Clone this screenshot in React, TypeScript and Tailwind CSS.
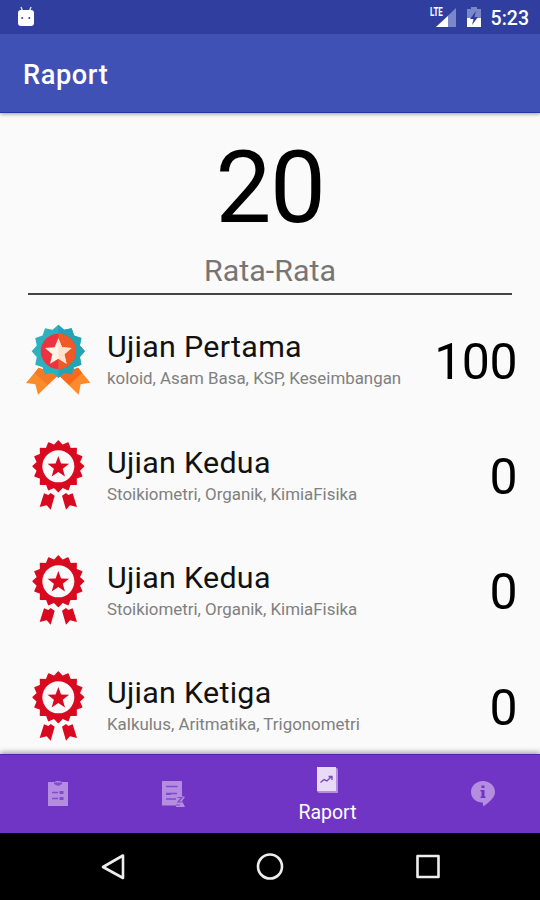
import clsx from 'clsx'

type Ujian = {
  id: number
  judul: string
  materi: string
  nilai: number
}

const daftarUjian: Ujian[] = [
  { id: 1, judul: 'Ujian Pertama', materi: 'koloid, Asam Basa, KSP, Keseimbangan', nilai: 100 },
  { id: 2, judul: 'Ujian Kedua', materi: 'Stoikiometri, Organik, KimiaFisika', nilai: 0 },
  { id: 3, judul: 'Ujian Kedua', materi: 'Stoikiometri, Organik, KimiaFisika', nilai: 0 },
  { id: 4, judul: 'Ujian Ketiga', materi: 'Kalkulus, Aritmatika, Trigonometri', nilai: 0 },
]

// points of a star / zigzag seal, first tip pointing up
function starPoints(cx: number, cy: number, outer: number, inner: number, tips: number) {
  return Array.from({ length: tips * 2 }, (_, i) => {
    const r = i % 2 === 0 ? outer : inner
    const a = (Math.PI * i) / tips - Math.PI / 2
    return `${(cx + r * Math.cos(a)).toFixed(2)},${(cy + r * Math.sin(a)).toFixed(2)}`
  }).join(' ')
}

function MedalColor() {
  return (
    <svg viewBox="36 38 216 216" className="w-[72px] h-[72px] shrink-0">
      <path d="M86 172 L48 218 L76 222 L84 253 L145 194 Z" fill="#fb8c2c" />
      <path d="M204 172 L241 217 L212 222 L206 253 L145 194 Z" fill="#ff8a2b" />
      <path d="M86 172 L74 188 L112 224 L145 194 Z" fill="#f47a25" />
      <path d="M204 172 L216 187 L178 224 L145 194 Z" fill="#f7691c" />
      <polygon points={starPoints(145, 123, 80, 67, 12)} fill="#2eb1bf" />
      <clipPath id="half">
        <rect x="145" y="30" width="100" height="190" />
      </clipPath>
      <polygon points={starPoints(145, 123, 80, 67, 12)} fill="#25a3b4" clipPath="url(#half)" />
      <circle cx="145" cy="123" r="53" fill="#ee3340" />
      <circle cx="145" cy="123" r="53" fill="#f05a28" clipPath="url(#half)" />
      <polygon points={starPoints(145, 126, 42, 19, 5)} fill="#fff4e6" />
      <polygon points={starPoints(145, 126, 42, 19, 5)} fill="#ffe3cc" clipPath="url(#half)" />
    </svg>
  )
}

function MedalRed() {
  return (
    <svg viewBox="36 38 216 216" className="w-[72px] h-[72px] shrink-0" fill="#d90a20">
      <polygon points={starPoints(145, 123, 76, 64, 16)} stroke="#d90a20" strokeWidth="4" strokeLinejoin="round" />
      <circle cx="145" cy="123" r="48" fill="#fafafa" />
      <polygon points={starPoints(145, 126, 34, 14, 5)} />
      <path d="M102 204 L115 209 L122 203 L134 211 L122 253 L110 240 L89 245 Z" />
      <path d="M188 204 L175 209 L168 203 L156 211 L168 253 L180 240 L201 245 Z" />
    </svg>
  )
}

function StatusBar() {
  return (
    <div className="h-[34px] bg-[#303f9f] flex items-center justify-between pl-[17px] pr-[11px]">
      <svg viewBox="0 0 18 22" className="w-[18px] h-[22px]">
        <path d="M4 1 L5.5 5 M14 1 L12.5 5" stroke="#dfe3fa" strokeWidth="1.4" />
        <path d="M1 7 Q1 4 4 4 H14 Q17 4 17 7 V17 Q17 20 14 20 H4 Q1 20 1 17 Z" fill="#fff" />
        <circle cx="5.2" cy="12" r="1" fill="#303f9f" />
        <circle cx="12.3" cy="12" r="1" fill="#303f9f" />
      </svg>
      <div className="flex items-center">
        <div className="relative w-[26px] h-[22px] mr-[10px]">
          <svg viewBox="0 0 26 22" className="w-full h-full">
            <path d="M25 2 V21 H5 Z" fill="#7c87ca" />
            <path d="M17 10 V21 H5 Z" fill="#fff" />
            <path d="M0 0 H14 V12 H0 Z" fill="#303f9f" />
          </svg>
          <span className="absolute left-[-1px] top-0 text-[12px] leading-[12px] font-bold scale-x-[0.66] origin-left">LTE</span>
        </div>
        <svg viewBox="0 0 14 22" className="w-[14px] h-[22px] mr-[10px]">
          <path d="M4 1 H10 V3 H14 V21 H0 V3 H4 Z" fill="#7c87ca" />
          <path d="M0 12 H14 V21 H0 Z" fill="#fff" />
          <path d="M9 5 L3 13 H6.5 L5 19 L11 11 H7.5 Z" fill="#303f9f" />
        </svg>
        <span className="text-[19.5px] leading-none font-medium relative top-[2px]">5:23</span>
      </div>
    </div>
  )
}

function UjianRow({ ujian }: { ujian: Ujian }) {
  return (
    <div className="h-[115.4px] shrink-0 flex items-center pl-[22px] pr-[23px]">
      {ujian.nilai > 0 ? <MedalColor /> : <MedalRed />}
      <div className="ml-[13px] flex-1">
        <p className="text-[30.4px] leading-[36px] tracking-[0.3px] text-[#111]">{ujian.judul}</p>
        <p className="text-[16.9px] leading-[20px] mt-[3px] text-[#808080] whitespace-nowrap">{ujian.materi}</p>
      </div>
      <p className="text-[50px] leading-none tracking-[-0.5px] text-black pt-[6px]">{ujian.nilai}</p>
    </div>
  )
}

function BottomNav() {
  return (
    <nav className="relative h-[79px] shrink-0 bg-[#7035c5] border-t border-[#5a1eb0] flex shadow-[0_-2px_5px_rgba(0,0,0,0.35)]">
      <div className="w-[115px] flex items-center justify-center">
        <svg viewBox="0 0 20 25" className="w-5 h-[25px] mb-[2px]">
          <path d="M0 1 H6 Q10 -1 14 1 H20 V25 H0 Z" fill="#b48ce0" />
          <path d="M6 1.5 H14 V3 L10 5 L6 3 Z" fill="#7f4acb" />
          <path d="M4 11.5 H10 M4 17.5 H10" stroke="#7f4acb" strokeWidth="1.3" />
          <path d="M11.500 10 H15.500 V13 H11.500 Z M11.500 16 H15.500 V19 H11.500 Z" fill="#7f4acb" />
        </svg>
      </div>
      <div className="w-[116px] flex items-center justify-center">
        <svg viewBox="0 0 23 27" className="w-[23px] h-[27px]">
          <path d="M0 0 H20 V15 L23 16 L20 20 L23 26 H14 V24.500 H0 Z" fill="#b48ce0" />
          <path d="M4 5.500 H15.500 M4 12.500 H15 M4 18 H14" stroke="#7f4acb" strokeWidth="1.5" />
          <path d="M4 13.500 H9 M15.500 16.500 H20 L16 21 H20.500 M14 24 H18" stroke="#7f4acb" strokeWidth="1.2" fill="none" />
        </svg>
      </div>
      <div className="w-[193px] flex flex-col items-center pt-[11px]">
        <svg viewBox="0 0 23 28" className="w-[23px] h-[28px]">
          <path d="M3 2 H20.500 Q22 2 22 4 V27 H4 Q1 27 1 24 Z" fill="#b48ce0" />
          <path d="M1 1 H20 V25 H1 Z" fill="#e9daf7" />
          <path d="M4.500 16.500 L8 13.500 L11 15 L15.500 10.500 M12.500 10.500 H16 V14" stroke="#7b4bbd" strokeWidth="1.4" fill="none" />
        </svg>
        <span className="text-[19.5px] leading-[24px] mt-[7px] text-white">Raport</span>
      </div>
      <div className="flex-1 flex items-center justify-center">
        <svg viewBox="0 0 24 26" className="w-6 h-[26px] mb-px ml-px">
          <path d="M12 0 C19 0 24 5 24 11 C24 17 18 21 12.500 25.500 L11.500 21.500 C5 21.500 0 17 0 11 C0 5 5 0 12 0 Z" fill="#b48ce0" />
          <path d="M10.500 4.500 H13.500 V7 H10.500 Z M9.500 9 H13.500 V15.500 H14.500 V17 H9.500 V15.500 H10.500 V10.500 H9.500 Z" fill="#7035c5" />
        </svg>
      </div>
    </nav>
  )
}

function SystemNav() {
  const icon = 'w-[28px] h-[28px]'
  return (
    <div className="h-[67px] shrink-0 bg-black flex items-center justify-center gap-[130px]">
      <svg viewBox="0 0 28 28" className={clsx(icon, 'overflow-visible')} fill="none" stroke="#eee" strokeWidth="2.6" strokeLinejoin="round">
        <path d="M25 2.500 V25 L5 14 Z" />
      </svg>
      <svg viewBox="0 0 28 28" className={icon} fill="none" stroke="#eee" strokeWidth="2.6">
        <circle cx="14" cy="13.500" r="12" />
      </svg>
      <svg viewBox="0 0 28 28" className={icon} fill="none" stroke="#eee" strokeWidth="2.6" strokeLinejoin="round">
        <rect x="3.500" y="3" width="21" height="21" />
      </svg>
    </div>
  )
}

export default function App() {
  return (
    <div className="w-[540px] h-[900px] overflow-hidden flex flex-col bg-[#fafafa] font-['Roboto',sans-serif] text-white">
      {/* Header */}
      <header className="relative shrink-0 shadow-[0_1px_4px_rgba(0,0,0,0.4)]">
        <StatusBar />
        <div className="h-[79px] bg-[#3f51b5] border-b border-[#2338a8] flex items-center pl-[23px] pt-[6px]">
          <h1 className="text-[27.2px] leading-none font-medium tracking-[0.6px]">Raport</h1>
        </div>
      </header>

      {/* Nilai rata-rata */}
      <main className="flex-1 min-h-0 overflow-hidden flex flex-col">
        <div className="h-[182px] mx-7 shrink-0 border-b-2 border-[#444] text-center pt-[16px]">
          <p className="text-[99.5px] leading-[118px] tracking-[-1.5px] text-black">20</p>
          <p className="text-[30.4px] leading-[36px] mt-[6px] text-[#757575]">Rata-Rata</p>
        </div>

        {/* Daftar ujian */}
        <div className="pt-[6px]">
          {daftarUjian.map(u => <UjianRow key={u.id} ujian={u} />)}
        </div>
      </main>

      <BottomNav />
      <SystemNav />
    </div>
  )
}
